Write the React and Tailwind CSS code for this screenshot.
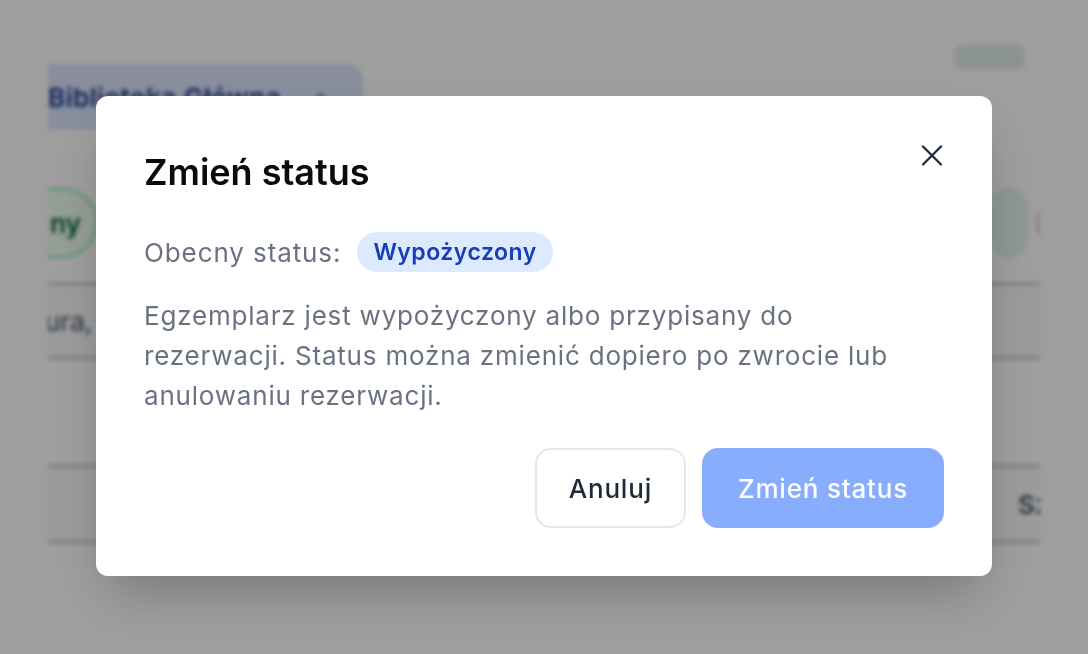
import { ChevronUp } from 'lucide-react'

// Page behind the dialog (dimmed and blurred by the overlay)
function BackgroundPage() {
  return (
    <div className="h-[654px] w-full bg-white px-12">
      <div className="h-full overflow-hidden">
        <div className="ml-[-60px] w-[1100px]">
          <div className="flex items-start justify-between pt-16">
            <div className="flex h-[66px] items-center gap-7 rounded-r-2xl bg-[#dbe6fb] pl-[60px] pr-[30px] text-[26px] font-semibold tracking-[0.5px] text-blue-900">
              <span>Biblioteka Główna</span>
              <ChevronUp className="h-6 w-6 text-gray-500" />
            </div>
            <div className="mr-[63px] mt-[-19px] h-6 w-[70px] rounded-md bg-[#e2efe8]" />
          </div>

          <div className="mt-[58px] flex items-center justify-between">
            <div className="flex h-[70px] items-center rounded-r-full border-2 border-l-0 border-green-300 bg-green-50 pl-[62px] pr-[15px] text-[26px] font-semibold text-green-800">
              ny
            </div>
            <div className="mr-3 flex items-center gap-2">
              <div className="h-[70px] w-[38px] rounded-full bg-[#e3f4f1]" />
              <div className="h-10 w-10 rounded-full border-2 border-red-300" />
            </div>
          </div>

          <div className="mt-6 flex h-[78px] items-center overflow-hidden border-y-4 border-gray-300 bg-gray-50 pl-[57px] text-[26px] text-gray-600">
            <span className="whitespace-nowrap">ura, autor, ISBN</span>
          </div>

          <div className="mt-[104px] flex h-[80px] items-center border-y-4 border-gray-300 bg-gray-50 pl-[1030px] text-[26px] font-semibold text-gray-600">
            <span className="whitespace-nowrap">Szukaj</span>
          </div>
        </div>
      </div>
    </div>
  )
}

function StatusDialog() {
  return (
    <div className="w-[896px] rounded-xl bg-white px-12 pb-12 pt-12 shadow-2xl">
      <div className="flex items-start justify-between">
        <h2 className="mt-2 text-[36px] font-semibold leading-10 text-[#0b0b0f]">Zmień status</h2>
        <button className="text-gray-800">
          <svg width="24" height="24" viewBox="0 0 24 24" fill="none" stroke="currentColor" strokeWidth="2.3" strokeLinecap="round">
            <path d="M3 2.5 21 20.5M21 2.5 3 20.5" />
          </svg>
        </button>
      </div>

      <div className="mt-10 flex h-10 items-center gap-4">
        <span className="text-[26px] tracking-[0.9px] text-gray-500">Obecny status:</span>
        <span className="flex h-10 items-center rounded-full bg-blue-100 px-4 text-[23px] font-semibold tracking-[0.5px] text-blue-800">
          Wypożyczony
        </span>
      </div>

      <p className="mt-6 text-[26px] leading-10 tracking-[0.8px] text-gray-500">
        Egzemplarz jest wypożyczony albo przypisany do
        <br />
        rezerwacji. Status można zmienić dopiero po zwrocie lub
        <br />
        anulowaniu rezerwacji.
      </p>

      <div className="mt-8 flex justify-end gap-4">
        <button className="h-20 rounded-2xl border-2 border-gray-200 bg-white px-8 text-[26px] font-medium tracking-[0.8px] text-gray-800">
          Anuluj
        </button>
        <button
          disabled
          className="h-20 rounded-2xl border-2 border-transparent bg-blue-600 px-[34px] text-[26px] font-medium tracking-[0.8px] text-white opacity-50"
        >
          Zmień status
        </button>
      </div>
    </div>
  )
}

export default function App() {
  return (
    <div className="relative h-[654px] w-[1088px] overflow-hidden font-['Inter',_'Noto_Sans',_sans-serif]">
      <BackgroundPage />
      <div className="fixed inset-0 flex items-start justify-center bg-black/[0.38] pt-24 backdrop-blur-[2px]">
        <StatusDialog />
      </div>
    </div>
  )
}
